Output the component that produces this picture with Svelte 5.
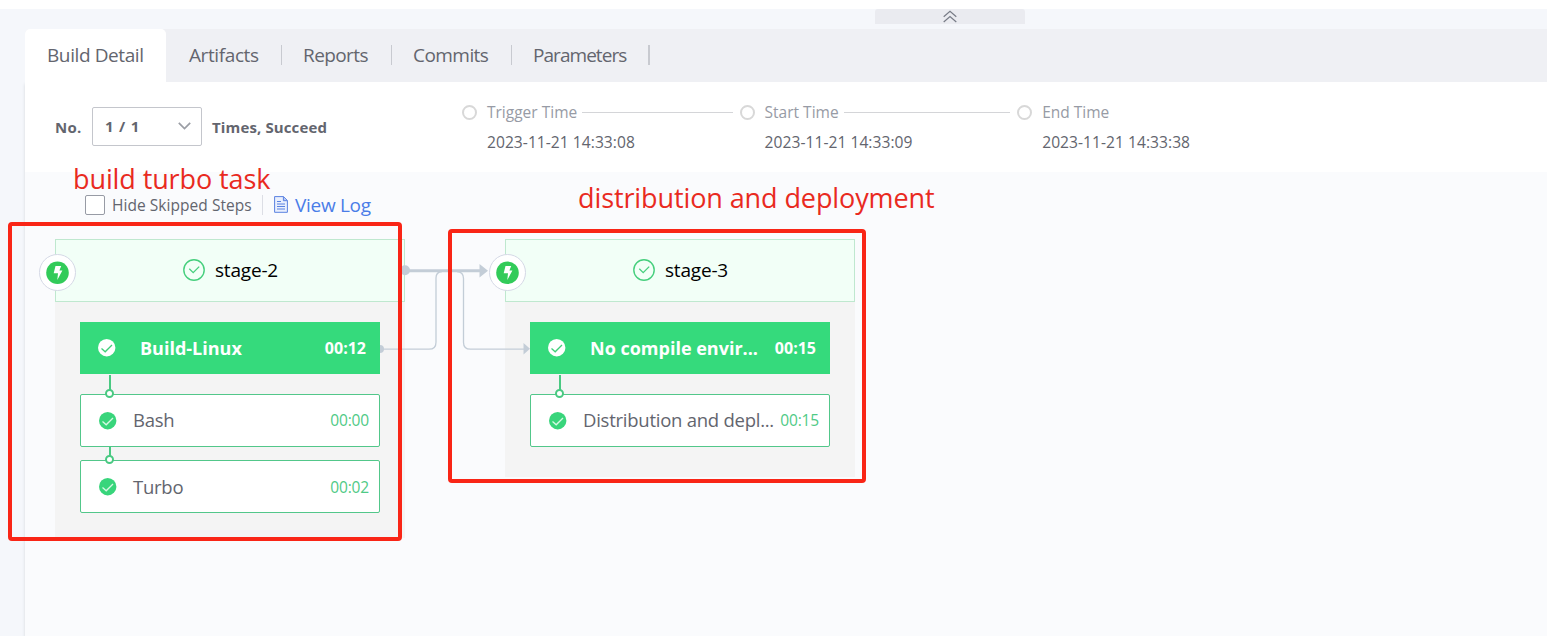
<script>
  const tabs = ['Build Detail', 'Artifacts', 'Reports', 'Commits', 'Parameters'];
  const times = [
    { label: 'Trigger Time', value: '2023-11-21 14:33:08' },
    { label: 'Start Time', value: '2023-11-21 14:33:09' },
    { label: 'End Time', value: '2023-11-21 14:33:38' }
  ];
  const stages = [
    {
      name: 'stage-2',
      job: { name: 'Build-Linux', time: '00:12' },
      steps: [
        { name: 'Bash', time: '00:00' },
        { name: 'Turbo', time: '00:02' }
      ]
    },
    {
      name: 'stage-3',
      job: { name: 'No compile envir...', time: '00:15' },
      steps: [{ name: 'Distribution and depl...', time: '00:15' }]
    }
  ];
</script>

<div class="page">
  <div class="topstrip"></div>
  <div class="collapse-row">
    <div class="collapse">
      <svg width="14" height="13" viewBox="0 0 14 13" fill="none" stroke="#777b86" stroke-width="1.2">
        <path d="M0.7 6.7 7 1.2l6.3 5.5M0.7 12 7 6.5l6.3 5.5" />
      </svg>
    </div>
  </div>

  <div class="content">
    <nav class="tabs">
      {#each tabs as tab, i}
        <div class="tab t{i}" class:active={i === 0}><span>{tab}</span></div>
      {/each}
    </nav>

    <div class="panel">
      <section class="info">
        <div class="run">
          <span class="no">No.</span>
          <div class="select">
            <span>1 / 1</span>
            <svg width="13" height="8" viewBox="0 0 13 8" fill="none" stroke="#9b9ea5" stroke-width="1.7"><path d="M.8.9 6.5 6.6 12.2.9" /></svg>
          </div>
          <span class="result">Times, Succeed</span>
        </div>
        <div class="timeline">
          {#each times as t, i}
            <div class="time">
              <div class="time-head">
                <i class="dot"></i><span>{t.label}</span>
                {#if i < 2}<i class="rule"></i>{/if}
              </div>
              <div class="time-value">{t.value}</div>
            </div>
          {/each}
        </div>
      </section>

      <section class="canvas">
        <div class="tools">
          <i class="checkbox"></i>
          <span class="hide">Hide Skipped Steps</span>
          <i class="sep"></i>
          <svg class="doc" width="14" height="17" viewBox="0 0 14 17" fill="none" stroke="#5a82e0">
            <path fill="#e9effd" d="M.6.6h9l3.8 3.8v11.9H.6z" />
            <path fill="#b4c6f5" d="M9.4.8v3.9h3.8" />
            <path d="M3 5.5h4M3 8h8M3 10.5h8M3 13h8" />
          </svg>
          <span class="log">View Log</span>
        </div>

        <div class="stages">
          {#each stages as s}
            <div class="stage">
              <div class="stage-head">
                <div class="bolt">
                  <svg width="24" height="24" viewBox="0 0 24 24">
                    <circle cx="11.5" cy="11.7" r="11.3" fill="#32cb59" />
                    <path d="M9.500 5h5.700l-1.800 4.400h3L11.300 19l.7-6.700H7.700z" fill="#fff" />
                  </svg>
                </div>
                <svg width="22" height="22" viewBox="0 0 22 22" fill="none" stroke="#46cf7d">
                  <circle cx="11" cy="11" r="10.2" stroke-width="1.4" />
                  <path d="M6.3 9.800l3.900 3.900 6-6.100" stroke-width="1.3" />
                </svg>
                <span>{s.name}</span>
              </div>
              <div class="stage-body">
                <div class="job">
                  <svg width="18" height="18" viewBox="0 0 18 18">
                    <circle cx="8.7" cy="8.7" r="8.7" fill="#fff" />
                    <path d="M3.500 9.500l3.700 3.300L14 6" fill="none" stroke="#3fcf79" stroke-width="1.300" />
                  </svg>
                  <span class="job-name">{s.job.name}</span>
                  <span class="job-time">{s.job.time}</span>
                </div>
                {#each s.steps as st}
                  <div class="step">
                    <i class="stem"></i><i class="ring"></i>
                    <svg width="18" height="18" viewBox="0 0 18 18">
                      <circle cx="8.700" cy="8.700" r="8.700" fill="#38d57b" />
                      <path d="M3.500 9.500l3.700 3.300L14 6" fill="none" stroke="#d6f8e3" stroke-width="1.300" />
                    </svg>
                    <span class="step-name">{st.name}</span>
                    <span class="step-time">{st.time}</span>
                  </div>
                {/each}
              </div>
            </div>
          {/each}
        </div>

        <svg class="links" width="150" height="110" viewBox="380 250 150 110" fill="none" stroke="#c3cdd7">
          <path d="M405 270.700h76" stroke-width="3" />
          <path d="M380 349.200h49q7 0 7-7V278q0-6 6-6.500M457 271.500q6.500.5 6.500 7v64q0 6.700 7 6.700h56" stroke-width="1.300" />
          <g fill="#c3cdd7" stroke="none">
            <circle cx="405" cy="270.200" r="5" />
            <path d="M479.500 264v13.500l8.500-6.700zM523.500 343v11.500l6.500-5.700zM380 345a4 4 0 0 1 0 8z" />
          </g>
        </svg>

        <div class="frame frame-build"></div>
        <div class="frame frame-deploy"></div>
        <div class="note note-build">build turbo task</div>
        <div class="note note-deploy">distribution and deployment</div>
      </section>
    </div>
  </div>
</div>

<style>
  :global(body) { background: #f5f7fb; }
  .page {
    width: 1547px; height: 636px; overflow: hidden;
    display: flex; flex-direction: column;
    background: #f5f7fb; color: #63656e;
    font-family: "Open Sans", "Noto Sans", sans-serif;
    white-space: nowrap;
  }
  .page * { box-sizing: border-box; }
  svg { flex: none; display: block; }
  i { flex: none; display: block; }
  .topstrip { height: 9px; background: #fff; flex: none; }
  .collapse-row { height: 20px; flex: none; padding-left: 875px; }
  .collapse {
    width: 150px; height: 15px; background: #eaebf0; border-radius: 3px 3px 0 0;
    display: flex; justify-content: center; padding: 1px 1px 0 0;
  }
  .content { flex: 1; margin-left: 25px; display: flex; flex-direction: column; }
  .panel { flex: 1; display: flex; flex-direction: column; box-shadow: 0 2px 3px #d5d8de; }
  .tabs { position: relative; height: 53px; flex: none; display: flex; background: #eff0f4; border-radius: 5px 0 0 0; font-size: 19px; }
  .tab { position: relative; display: flex; align-items: center; padding: 0 0 1px 22px; }
  .tab.active { background: #fff; border-radius: 5px 5px 0 0; }
  .tab:not(.active)::after { content: ""; position: absolute; right: 0; top: 16px; width: 1px; height: 20px; background: #c8cad0; }
  .t0 { width: 141px; letter-spacing: -.4px; }
  .t1 { width: 116px; padding-left: 23px; letter-spacing: -.4px; }
  .t2 { width: 110px; padding-left: 21px; letter-spacing: -.6px; }
  .t3 { width: 120px; padding-left: 21px; letter-spacing: -.55px; }
  .t4 { width: 138px; padding-left: 21px; letter-spacing: -.95px; }
  .tab.t4::after { width: 2px; }

  .info { height: 90px; flex: none; display: flex; background: #fff; padding-left: 30px; }
  .run { width: 407px; height: 89px; display: flex; align-items: center; font-size: 15px; font-weight: 700; }
  .no { width: 37px; letter-spacing: .3px; }
  .select {
    width: 110px; height: 39px; border: 1px solid #c4c6cc; border-radius: 2px;
    display: flex; align-items: center; justify-content: space-between; padding: 0 10px 2px 12px;
    letter-spacing: .8px;
  }
  .result { margin-left: 10px; letter-spacing: .13px; }
  .timeline { display: flex; padding-top: 19px; }
  .time { width: 277.600px; }
  .time-head { display: flex; align-items: center; height: 22px; font-size: 15.500px; color: #979ba5; }
  .dot { width: 15px; height: 15px; border: 2px solid #d8d8d8; border-radius: 50%; margin-right: 10px; }
  .rule { flex: 1; height: 1px; background: #d4d5d8; margin: 0 7px 0 5px; }
  .time-value { padding-left: 25px; margin-top: 8px; font-size: 15.600px; letter-spacing: .04px; line-height: 22px; }

  .canvas { position: relative; flex: 1; background: #fafbfd; padding-left: 30px; }
  .tools { height: 67px; display: flex; align-items: center; padding: 0 0 2px 30px; }
  .checkbox { width: 20px; height: 20px; border: 1px solid #979ba5; border-radius: 2px; background: #fff; margin-right: 7px; }
  .hide { width: 150px; font-size: 15.500px; letter-spacing: .05px; }
  .sep { width: 1px; height: 20px; background: #dcdee5; margin-right: 11px; }
  .doc { margin-right: 7px; margin-top: -1px; }
  .log { font-size: 19px; letter-spacing: -.3px; color: #4a7de8; }

  .stages { display: flex; align-items: flex-start; gap: 100px; }
  .stage { width: 350px; background: #f4f4f4; }
  .stage-head {
    position: relative; height: 63px; border: 1px solid #bfe8cf; background: #f2fff7;
    display: flex; align-items: center; justify-content: center; gap: 10px;
    padding: 0 0 1px 1px;
    font-size: 19px; letter-spacing: -.2px; color: #000;
  }
  .stage-head span { margin-top: -1px; }
  .bolt {
    position: absolute; left: -17px; top: 14px; width: 37px; height: 37px;
    display: flex; align-items: center; justify-content: center;
    background: #fff; border: 1px solid #d5d9e6; border-radius: 50%;
  }
  .stage-body { padding: 20px 25px 25px; }
  .stage:last-child .stage-body { padding-bottom: 30px; }
  .job { height: 52px; display: flex; align-items: center; padding: 0 14px 0 18px; background: #35da7c; color: #fff; font-weight: 700; margin-bottom: 20px; }
  .job-name { flex: 1; padding-left: 24px; font-size: 18px; }
  .job-time { font-size: 16px; }
  .step { position: relative; height: 53px; display: flex; align-items: center; padding: 0 10px 0 18px; background: #fff; border: 1px solid #52c78a; border-radius: 2px; }
  .step + .step { margin-top: 13px; }
  .stem { position: absolute; left: 28px; top: -20px; width: 2px; height: 17px; background: #4ac982; }
  .step + .step .stem { top: -14px; height: 11px; }
  .ring { position: absolute; left: 24px; top: -6px; width: 9px; height: 9px; border: 2px solid #4ac982; border-radius: 50%; background: #fff; }
  .step-name { flex: 1; padding-left: 16px; font-size: 18.500px; letter-spacing: -.25px; }
  .step-time { font-size: 15.500px; letter-spacing: -.15px; color: #4fca86; }
  .job + .step .step-name, .job + .step .step-time { margin-top: -2px; }

  .links { position: absolute; left: 355px; top: 78px; }
  .frame { position: absolute; border: 4px solid #f92516; border-radius: 4px; }
  .frame-build { left: -17px; top: 50px; width: 394px; height: 319px; }
  .frame-deploy { left: 423px; top: 57px; width: 418px; height: 254px; }
  .note { position: absolute; color: #e92a1f; font-size: 27px; line-height: 36px; letter-spacing: -.1px; }
  .note-build { left: 48px; top: -11px; }
  .note-deploy { left: 553px; top: 8px; }
</style>
